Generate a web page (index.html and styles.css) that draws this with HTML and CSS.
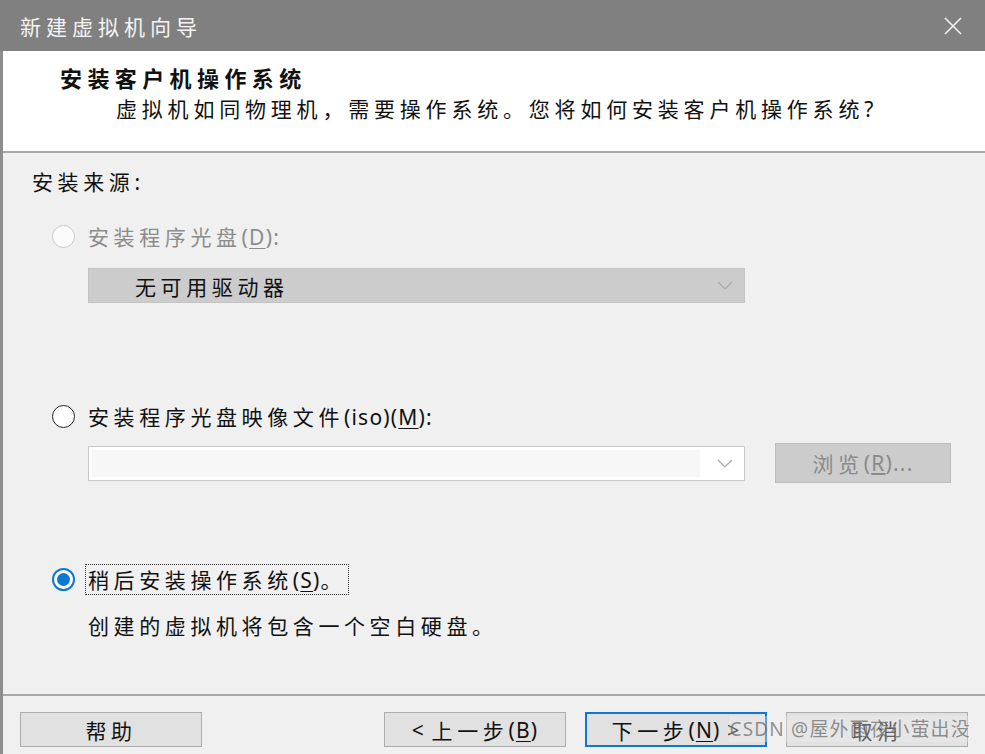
FILE: index.html
```html
<!DOCTYPE html>
<html lang="zh-CN">
<head>
<meta charset="utf-8">
<title>新建虚拟机向导</title>
<link rel="stylesheet" href="styles.css">
</head>
<body>
<div class="dialog">
  <div class="titlebar">
    <span class="title">新建虚拟机向导</span>
    <svg class="close" width="20" height="20" viewBox="0 0 20 20"><path d="M2 2 L18 18 M18 2 L2 18" stroke="#f2f2f2" stroke-width="1.6" fill="none"/></svg>
  </div>
  <div class="frame">
    <div class="header">
      <div class="heading">安装客户机操作系统</div>
      <div class="subtitle">虚拟机如同物理机，需要操作系统。您将如何安装客户机操作系统<span class="lat">?</span></div>
    </div>
    <div class="content">
      <div class="label">安装来源<span class="lat">:</span></div>

      <div class="radio-row row1 disabled">
        <span class="radio off-disabled"></span>
        <span class="rtext">安装程序光盘<span class="lat">(<u>D</u>):</span></span>
      </div>
      <div class="select disabled-select">
        <span class="select-text">无可用驱动器</span>
        <svg class="chev" width="16" height="9" viewBox="0 0 16 9"><polyline points="1,1 8,8 15,1" fill="none" stroke="#a8a8a8" stroke-width="1.2"/></svg>
      </div>

      <div class="radio-row row2">
        <span class="radio off"></span>
        <span class="rtext">安装程序光盘映像文件<span class="lat">(iso)(<u>M</u>):</span></span>
      </div>
      <div class="iso-row">
        <div class="combo">
          <div class="combo-field"></div>
          <svg class="chev" width="16" height="9" viewBox="0 0 16 9"><polyline points="1,1 8,8 15,1" fill="none" stroke="#a8a8a8" stroke-width="1.2"/></svg>
        </div>
        <div class="browse">浏览<span class="lat">(<u>R</u>)...</span></div>
      </div>

      <div class="radio-row row3">
        <span class="radio on"><span class="dot"></span></span>
        <span class="rtext focus">稍后安装操作系统<span class="lat">(<u>S</u>)</span>。</span>
      </div>
      <div class="desc">创建的虚拟机将包含一个空白硬盘。</div>
    </div>
    <div class="footer">
      <div class="btn">帮助</div>
      <div class="btn-group">
        <div class="btn"><span class="lat">&lt;&nbsp;</span>上一步<span class="lat">(<u>B</u>)</span></div>
        <div class="btn primary">下一步<span class="lat">(<u>N</u>) &gt;</span></div>
        <div class="btn">取消</div>
      </div>
      <div class="watermark">CSDN @屋外雨夜小萤出没</div>
    </div>
  </div>
</div>
</body>
</html>
```

FILE: styles.css
```css
* { box-sizing: border-box; }
html, body { margin: 0; padding: 0; }
body {
  width: 985px;
  height: 754px;
  overflow: hidden;
  background: #f0f0f0;
  font-family: "Noto Sans CJK SC", "Noto Sans", sans-serif;
  color: #111;
}
.dialog {
  width: 985px;
  height: 754px;
  display: flex;
  flex-direction: column;
}
.titlebar {
  height: 51px;
  background: #808080;
  display: flex;
  align-items: center;
  justify-content: space-between;
  padding: 0 22px 0 20px;
}
.title {
  color: #f4f4f4;
  font-size: 21px;
  letter-spacing: 5px;
  line-height: 26px;
}
.close { display: block; margin-top: 1px; }
.frame {
  flex: 1;
  border-left: 3px solid #8e8e8e;
  display: flex;
  flex-direction: column;
  position: relative;
}
.header {
  height: 102px;
  background: #ffffff;
  border-bottom: 2px solid #a8a8a8;
  padding: 13px 0 0 57px;
}
.heading {
  font-size: 22px;
  font-weight: 700;
  letter-spacing: 5.4px;
  line-height: 26px;
}
.subtitle {
  margin-top: 5px;
  margin-left: 56px;
  font-size: 21px;
  letter-spacing: 4.8px;
  line-height: 26px;
}
.lat {
  font-family: "Noto Sans", sans-serif;
  letter-spacing: 1.2px;
}
.content {
  height: 541px;
  padding: 15px 0 0 29px;
  font-size: 21px;
  letter-spacing: 4.6px;
  line-height: 26px;
}
.label { height: 26px; }
.radio-row {
  display: flex;
  align-items: center;
  height: 26px;
  margin-left: 20px;
}
.row1 { margin-top: 29px; }
.row2 { margin-top: 100px; }
.row3 { margin-top: 83px; }
.radio {
  width: 23px;
  height: 23px;
  border-radius: 50%;
  flex: none;
  display: flex;
  align-items: center;
  justify-content: center;
  margin-right: 13px;
}
.off-disabled { border: 1.5px solid #c9c9c9; background: #fbfbfb; }
.off { border: 1.6px solid #222; background: #fff; }
.on { border: 2px solid #0a78d4; background: #fff; }
.dot { width: 13px; height: 13px; border-radius: 50%; background: #0a78d4; }
.disabled .rtext { color: #8c8c8c; }
.rtext u { text-decoration-thickness: 1px; text-underline-offset: 3px; }
.focus {
  outline: 1px dotted #333;
  outline-offset: 0px;
  padding: 1px 2px 1px 2px;
  margin-left: -2px;
}
.select {
  margin: 19px 0 0 56px;
  width: 657px;
  height: 35px;
  display: flex;
  align-items: center;
  justify-content: space-between;
  padding: 0 11px 0 46px;
}
.disabled-select {
  background: #cccccc;
  border: 1px solid #c4c4c4;
}
.select-text { color: #111; }
.chev { display: block; }
.iso-row {
  margin: 14px 0 0 56px;
  display: flex;
  align-items: center;
  height: 40px;
}
.combo {
  width: 657px;
  height: 35px;
  background: #ffffff;
  border: 1px solid #c9c9c9;
  display: flex;
  align-items: center;
  padding: 3px 11px 3px 3px;
}
.combo-field {
  width: 613px;
  height: 27px;
  background: #f7f7f7;
  margin-right: 17px;
}
.browse {
  margin-left: 30px;
  width: 176px;
  height: 40px;
  background: #cccccc;
  border: 1px solid #bdbdbd;
  color: #8a8a8a;
  display: flex;
  align-items: center;
  justify-content: center;
}
.desc {
  margin: 20px 0 0 56px;
}
.footer {
  flex: 1;
  border-top: 2px solid #a8a8a8;
  display: flex;
  align-items: flex-start;
  justify-content: space-between;
  padding: 16px 17px 0 17px;
  position: relative;
}
.btn-group { display: flex; gap: 19px; }
.btn {
  width: 182px;
  height: 35px;
  background: #e1e1e1;
  border: 1px solid #adadad;
  display: flex;
  align-items: center;
  justify-content: center;
  font-size: 21px;
  letter-spacing: 4.6px;
  color: #111;
}
.btn u { text-underline-offset: 3px; text-decoration-thickness: 1px; }
.primary { border: 2px solid #0a78d4; }
.watermark {
  position: absolute;
  right: 14px;
  top: 20px;
  font-size: 19px;
  letter-spacing: 1.2px;
  color: rgba(110, 110, 110, 0.75);
  background: rgba(240, 240, 240, 0.35);
  line-height: 26px;
  font-family: "Noto Sans", "Noto Sans CJK SC", sans-serif;
}
```
